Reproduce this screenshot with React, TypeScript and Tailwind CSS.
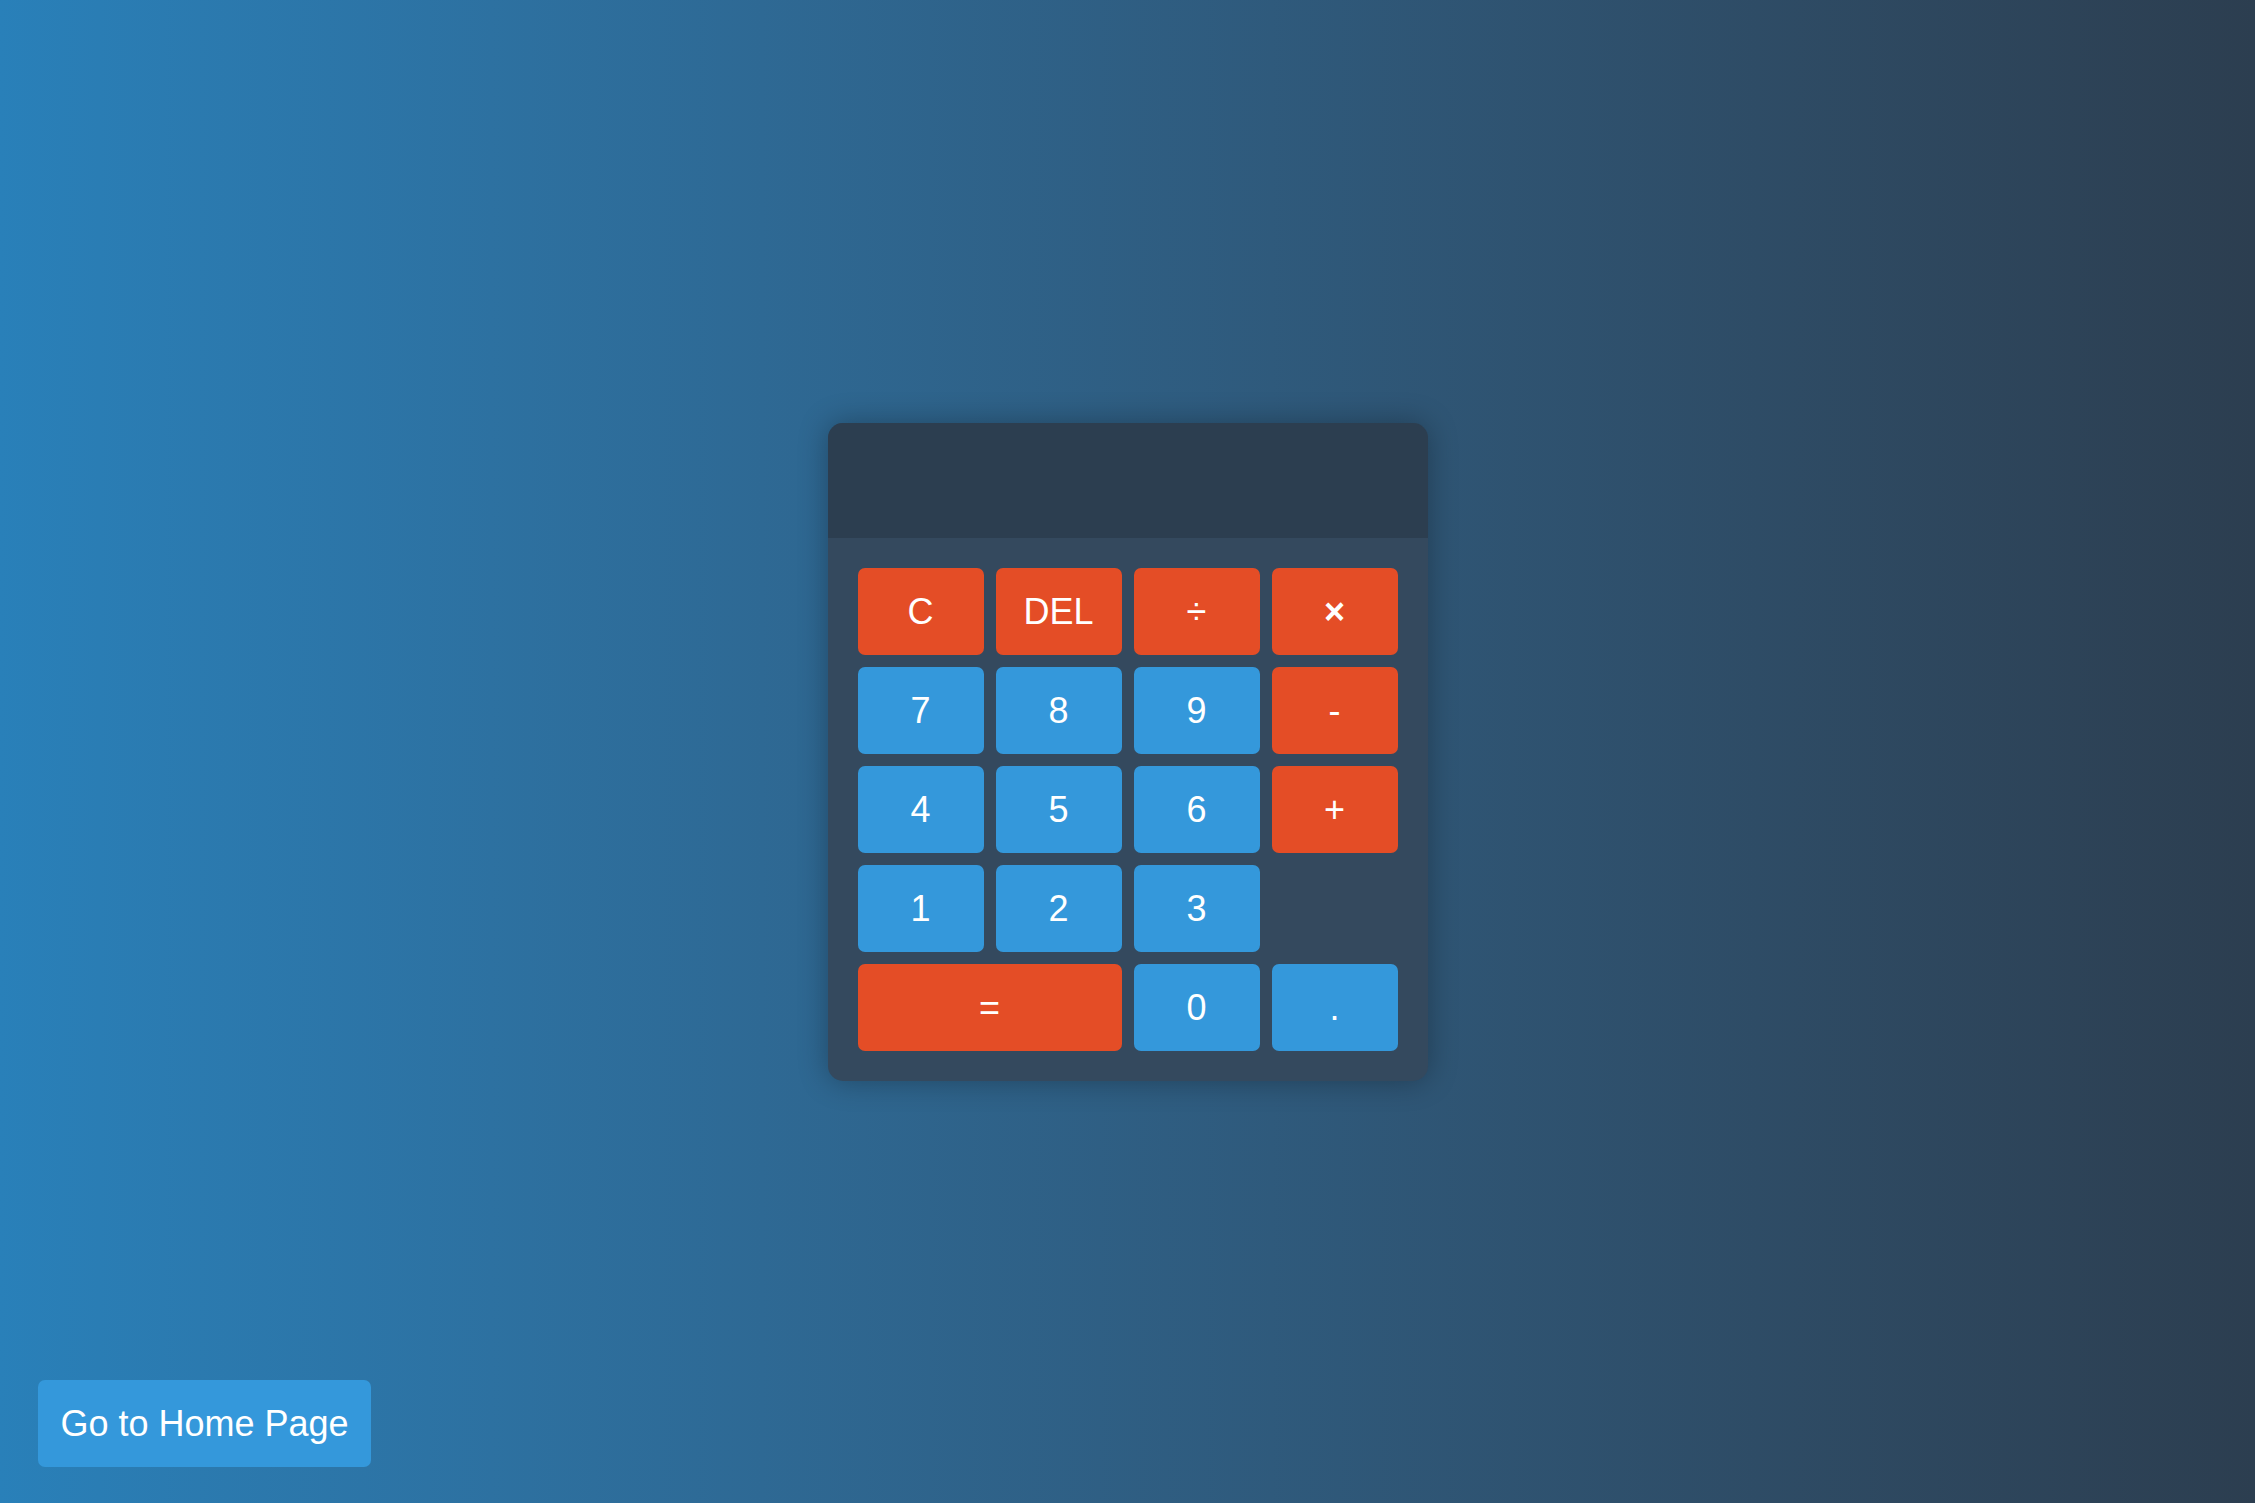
const keys: { label: string; kind: 'op' | 'num'; span?: boolean; empty?: boolean; bold?: boolean }[] = [
  { label: 'C', kind: 'op' },
  { label: 'DEL', kind: 'op' },
  { label: '÷', kind: 'op' },
  { label: '×', kind: 'op', bold: true },
  { label: '7', kind: 'num' },
  { label: '8', kind: 'num' },
  { label: '9', kind: 'num' },
  { label: '-', kind: 'op' },
  { label: '4', kind: 'num' },
  { label: '5', kind: 'num' },
  { label: '6', kind: 'num' },
  { label: '+', kind: 'op' },
  { label: '1', kind: 'num' },
  { label: '2', kind: 'num' },
  { label: '3', kind: 'num' },
  { label: '', kind: 'num', empty: true },
  { label: '=', kind: 'op', span: true },
  { label: '0', kind: 'num' },
  { label: '.', kind: 'num' },
];

const App = () => {
  return (
    <div
      className="relative flex min-h-screen w-full items-center justify-center bg-gradient-to-r from-[#2980b9] to-[#2c3e50]"
      style={{ fontFamily: '"Liberation Sans", Arial, sans-serif' }}
    >
      <div className="w-[600px] overflow-hidden rounded-[15px] bg-[#34495e] shadow-[0_0_30px_rgba(0,0,0,0.3)]">
        <div className="h-[115px] bg-[#2c3e50] px-[30px] text-right text-[48px] text-white" />
        <div className="grid grid-cols-4 gap-[12px] p-[30px]">
          {keys.map((k, i) =>
            k.empty ? (
              <div key={i} />
            ) : (
              <button
                key={i}
                className={
                  'h-[87px] rounded-[7px] pt-[2px] text-[36px] leading-none text-white ' +
                  (k.kind === 'op' ? 'bg-[#e44d26] ' : 'bg-[#3498db] ') +
                  (k.span ? 'col-span-2 ' : '') +
                  (k.bold ? 'text-[30px] font-bold' : '')
                }
              >
                {k.label}
              </button>
            )
          )}
        </div>
      </div>
      <button className="absolute bottom-[36px] left-[38px] h-[87px] w-[333px] rounded-[7px] bg-[#3498db] text-[36px] text-white">
        Go to Home Page
      </button>
    </div>
  );
};

export default App;
